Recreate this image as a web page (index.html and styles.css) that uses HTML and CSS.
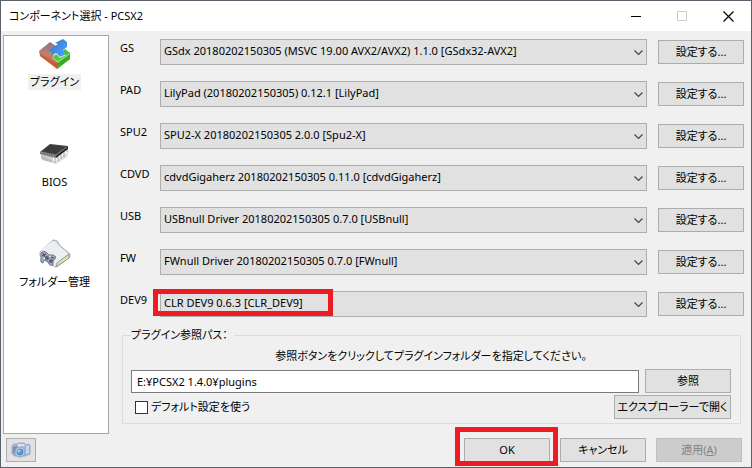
FILE: index.html
```html
<!DOCTYPE html>
<html lang="ja">
<head>
<meta charset="utf-8">
<title>コンポーネント選択 - PCSX2</title>
<link rel="stylesheet" href="styles.css">
</head>
<body>
<div class="window">
  <header class="titlebar">
    <h1>コンポーネント選択 - PCSX2</h1>
    <div class="captions">
      <button type="button" aria-label="最小化"><svg width="11" height="11" viewBox="0 0 11 11"><path d="M0 5.5H10" stroke="#000"/></svg></button>
      <button type="button" aria-label="最大化" disabled><svg width="11" height="11" viewBox="0 0 11 11"><path d="M.5.5H9.500V9.500H.5Z" fill="none" stroke="#ccc"/></svg></button>
      <button type="button" aria-label="閉じる"><svg width="11" height="11" viewBox="0 0 11 11"><path d="M.5.5L10.500 10.500M10.500.5L.5 10.500" stroke="#000" stroke-width="1.200"/></svg></button>
    </div>
  </header>
  <div class="content">
    <nav class="sidebar">
      <a href="#plugins" class="item selected">
        <svg width="34" height="32" viewBox="0 0 34 32">
          <defs>
            <linearGradient id="red" x1="0" y1="0" x2="0" y2="1"><stop offset="0" stop-color="#93727b"/><stop offset=".45" stop-color="#bd8274"/><stop offset="1" stop-color="#d4491d"/></linearGradient>
            <linearGradient id="blue" x1="0" y1="0" x2="1" y2="1"><stop offset="0" stop-color="#2e73cf"/><stop offset="1" stop-color="#55a5ff"/></linearGradient>
            <linearGradient id="green" x1="0" y1="0" x2="0" y2="1"><stop offset="0" stop-color="#43b83b"/><stop offset="1" stop-color="#67d936"/></linearGradient>
          </defs>
          <path d="M1 13L12 4L18 8L12 13L16 17L14 20L20 25V31L2 18Z" fill="url(#red)"/>
          <path d="M2 15L19 27V31L2 18Z" fill="#d0522c" opacity=".7"/>
          <path d="M11 12L20 6L17 5L25 1L29 4V9L25 12L29 16L22 19L18 15L15 17Z" fill="url(#blue)"/>
          <path d="M14 20L18 16L22 20L28 17L25 13L27 11L32 15V21L19 31V24Z" fill="url(#green)"/>
          <path d="M19 25L32 17V21L19 31Z" fill="#37ac2a"/>
          <path d="M15 20L20 24L31 16" fill="none" stroke="#9be884"/>
        </svg>
        <span>プラグイン</span>
      </a>
      <a href="#bios" class="item">
        <svg width="34" height="32" viewBox="0 0 34 32">
          <path d="M3 17L17 24L31 13L29 19L18 26L4 22Z" fill="#ddd"/>
          <path d="M4 15V21M6 16V22M8 17V23M10 18V23M12 18V24M14 19V24M17 19V25M20 17V23M23 15V21M26 13V19M29 10V14" stroke="#9a9a9a"/>
          <path d="M2 14L12 6L30 8L18 18Z" fill="#454545"/>
          <path d="M2 14L18 18V20L2 16Z" fill="#777"/>
          <path d="M18 18L30 8V11L18 20Z" fill="#202020"/>
          <path d="M5 13L12 7L27 9L17 16Z" fill="#393c3d"/>
          <path d="M3 14L18 17L29 9" fill="none" stroke="#929292" stroke-width=".7"/>
        </svg>
        <span>BIOS</span>
      </a>
      <a href="#folders" class="item">
        <svg width="34" height="32" viewBox="0 0 34 32">
          <path d="M2 14L15 2L19 3L21 7L32 16V19L20 28L17 29L2 18Z" fill="#e9ebed" stroke="#a9b5bb"/>
          <path d="M19 25L31 16V20L18 29Z" fill="#ebe4a4" stroke="#7e9da7"/>
          <path d="M3 12L15 3L29 15L18 25Z" fill="#eceeef"/>
          <path d="M15 2L19 3L21 7L32 16" fill="none" stroke="#a9b5bb"/>
          <path d="M3 15Q5 12 8 14L11 17L15 17Q19 18 17 21L15 23L15 27Q12 29 10 24L6 22L5 25Q2 25 3 20Z" fill="#a2a8b8" stroke="#717a91"/>
          <path d="M5 15L7 19M4 18L8 16M12 19L16 20" stroke="#404a65"/><circle cx="9" cy="20" r="2" fill="#56617a"/><circle cx="13" cy="23" r="2" fill="#596278"/>
          <path d="M5 21L7 20M11 18L13 19" stroke="#f7f7fb"/>
        </svg>
        <span>フォルダー管理</span>
      </a>
    </nav>
    <main class="panel">
      <form class="plugins">
        <label for="gs">GS</label><div class="combo"><select id="gs"><option>GSdx 20180202150305 (MSVC 19.00 AVX2/AVX2) 1.1.0 [GSdx32-AVX2]</option></select><svg width="9" height="6" viewBox="0 0 9 6"><path d="M.5.5L4.500 4.500L8.500.5"/></svg></div><button type="button" class="btn">設定する...</button>
        <label for="pad">PAD</label><div class="combo"><select id="pad"><option>LilyPad (20180202150305) 0.12.1 [LilyPad]</option></select><svg width="9" height="6" viewBox="0 0 9 6"><path d="M.5.5L4.500 4.500L8.500.5"/></svg></div><button type="button" class="btn">設定する...</button>
        <label for="spu2">SPU2</label><div class="combo"><select id="spu2"><option>SPU2-X 20180202150305 2.0.0 [Spu2-X]</option></select><svg width="9" height="6" viewBox="0 0 9 6"><path d="M.5.5L4.500 4.500L8.500.5"/></svg></div><button type="button" class="btn">設定する...</button>
        <label for="cdvd">CDVD</label><div class="combo"><select id="cdvd"><option>cdvdGigaherz 20180202150305 0.11.0 [cdvdGigaherz]</option></select><svg width="9" height="6" viewBox="0 0 9 6"><path d="M.5.5L4.500 4.500L8.500.5"/></svg></div><button type="button" class="btn">設定する...</button>
        <label for="usb">USB</label><div class="combo"><select id="usb"><option>USBnull Driver 20180202150305 0.7.0 [USBnull]</option></select><svg width="9" height="6" viewBox="0 0 9 6"><path d="M.5.5L4.500 4.500L8.500.5"/></svg></div><button type="button" class="btn">設定する...</button>
        <label for="fw">FW</label><div class="combo"><select id="fw"><option>FWnull Driver 20180202150305 0.7.0 [FWnull]</option></select><svg width="9" height="6" viewBox="0 0 9 6"><path d="M.5.5L4.500 4.500L8.500.5"/></svg></div><button type="button" class="btn">設定する...</button>
        <label for="dev9">DEV9</label><div class="combo"><select id="dev9"><option>CLR DEV9 0.6.3 [CLR_DEV9]</option></select><svg width="9" height="6" viewBox="0 0 9 6"><path d="M.5.5L4.500 4.500L8.500.5"/></svg><i class="mark mark-dev9"></i></div><button type="button" class="btn">設定する...</button>
      </form>
      <fieldset class="path">
        <legend>プラグイン参照パス：</legend>
        <label class="hint" for="folder">参照ボタンをクリックしてプラグインフォルダーを指定してください。</label>
        <div class="line">
          <input id="folder" class="text" type="text" value="E:¥PCSX2 1.4.0¥plugins">
          <button type="button" class="btn">参照</button>
        </div>
        <div class="line">
          <label class="check"><input type="checkbox">デフォルト設定を使う</label>
          <button type="button" class="btn wide">エクスプローラーで開く</button>
        </div>
      </fieldset>
    </main>
  </div>
  <footer class="footer">
    <button type="button" class="btn camera" aria-label="スクリーンショット">
      <svg width="20" height="16" viewBox="0 0 20 16">
        <path d="M1 4L3 2H6L8 1H13L15 3L18 2L19 4V12L14 14H4L1 12Z" fill="#a5b5d6" stroke="#8f9dc0" stroke-width=".8"/>
        <path d="M2 5L6 4V12L2 11Z" fill="#7d8fba"/><path d="M7 2H13L14 4L7 5Z" fill="#dbe4f7"/><path d="M15 4L18 3V11L15 12Z" fill="#c9d4ef"/>
        <circle cx="9" cy="10" r="5" fill="#c4d3e9" stroke="#8ea0c6"/><circle cx="9" cy="10" r="3.500" fill="#5b94c4"/><circle cx="8" cy="9" r="1.500" fill="#9bd3ed"/>
      </svg>
    </button>
    <div class="ok"><button type="button" class="btn">OK</button><i class="mark mark-ok"></i></div>
    <button type="button" class="btn">キャンセル</button>
    <button type="button" class="btn" disabled>適用(<u>A</u>)</button>
  </footer>
</div>
</body>
</html>
```
FILE: styles.css
```css
* { box-sizing: border-box; }
body {
  margin: 0;
  font: 11px/16px "Noto Sans", "Noto Sans CJK JP", sans-serif;
  font-feature-settings: "palt";
  color: #000;
}
button, input, select { font: inherit; font-feature-settings: inherit; color: inherit; margin: 0; }
svg { display: block; }
.window {
  min-height: 100vh;
  display: flex;
  flex-direction: column;
  background: #f0f0f0;
  border: 1px solid #59616b;
}
.titlebar {
  height: 30px;
  display: flex;
  align-items: center;
  justify-content: space-between;
  padding-left: 8px;
  background: #fff;
}
h1 { margin: 0; font-size: 11px; font-weight: 400; }
.captions { display: flex; }
.captions button {
  width: 46px;
  height: 28px;
  padding: 0;
  display: grid;
  place-items: center;
  border: 0;
  background: none;
}
.content { flex: 1; display: flex; gap: 11px; padding: 4px 7px 0 2px; }
.sidebar {
  width: 106px;
  flex: none;
  display: flex;
  flex-direction: column;
  gap: 48px;
  padding: 2px 3px 0 0;
  background: #fff;
  border: 1px solid #a5a7ab;
}
.item {
  display: flex;
  flex-direction: column;
  align-items: center;
  gap: 4px;
  color: inherit;
  text-decoration: none;
}
.item span { padding: 0 2px; }
.selected span { background: #f0f0f0; }
.panel { flex: 1; min-width: 0; padding-top: 4px; }
.plugins {
  display: grid;
  grid-template-columns: 40px 1fr 86px;
  row-gap: 16px;
  align-items: center;
}
.plugins > label { align-self: start; padding-top: 1px; }
.combo { position: relative; margin-right: 11px; }
.combo select {
  display: block;
  width: 100%;
  height: 26px;
  padding: 0 24px 2px 3px;
  appearance: none;
  border: 1px solid #adadad;
  border-radius: 0;
  background: #e1e1e1;
}
.combo svg { position: absolute; right: 4px; top: 11px; fill: none; stroke: #444; stroke-width: 1.2; pointer-events: none; }
.btn {
  width: 86px;
  height: 24px;
  padding: 0 0 1px;
  flex: none;
  border: 1px solid #adadad;
  background: #e1e1e1;
  white-space: nowrap;
}
.btn:disabled { background: #ccc; border-color: #bfbfbf; color: #838383; }
.path {
  margin: 10px 3px 0 2px;
  padding: 5px 9px 4px 8px;
  border: 1px solid #dcdcdc;
  min-width: 0;
}
.path legend { padding: 0 6px 0 0; height: 16px; }
.hint { display: block; text-align: center; margin-bottom: 5px; }
.line { display: flex; align-items: center; justify-content: space-between; gap: 6px; }
.line + .line { margin-top: 2px; }
.text { flex: 1; min-width: 0; height: 23px; padding: 0 5px; border: 1px solid #7a7a7a; background: #fff; }
.check { display: flex; align-items: center; gap: 3px; padding-left: 4px; }
.check input { appearance: none; width: 13px; height: 13px; border: 1px solid #333; background: #fff; }
.wide { width: 117px; }
.footer { display: flex; gap: 10px; padding: 4px 9px 5px 5px; }
.camera { width: 30px; display: grid; place-items: center; margin-right: auto; }
.ok { position: relative; }
.mark { position: absolute; border: 5px solid #ee1b24; pointer-events: none; }
.mark-dev9 { left: -7px; top: -2px; width: 180px; height: 27px; }
.mark-ok { inset: -11px -8px -4px -9px; }
```
